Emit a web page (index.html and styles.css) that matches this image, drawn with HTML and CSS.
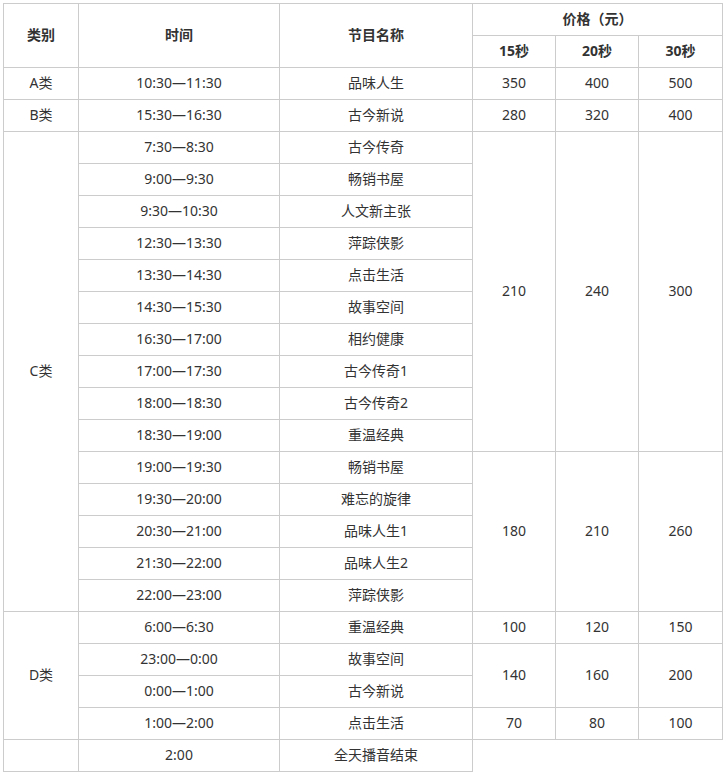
FILE: index.html
```html
<!DOCTYPE html>
<html lang="zh">
<head>
<meta charset="utf-8">
<link rel="stylesheet" href="styles.css">
</head>
<body>
<table class="schedule">
  <colgroup>
    <col class="c-type"><col class="c-time"><col class="c-name"><col class="c-price"><col class="c-price"><col class="c-price3">
  </colgroup>
  <tr class="head">
    <td rowspan="2">类别</td>
    <td rowspan="2">时间</td>
    <td rowspan="2">节目名称</td>
    <td colspan="3">价格（元）</td>
  </tr>
  <tr class="head">
    <td>15秒</td><td>20秒</td><td>30秒</td>
  </tr>
  <tr><td>A类</td><td>10:30—11:30</td><td>品味人生</td><td>350</td><td>400</td><td>500</td></tr>
  <tr><td>B类</td><td>15:30—16:30</td><td>古今新说</td><td>280</td><td>320</td><td>400</td></tr>
  <tr><td rowspan="15">C类</td><td>7:30—8:30</td><td>古今传奇</td><td rowspan="10">210</td><td rowspan="10">240</td><td rowspan="10">300</td></tr>
  <tr><td>9:00—9:30</td><td>畅销书屋</td></tr>
  <tr><td>9:30—10:30</td><td>人文新主张</td></tr>
  <tr><td>12:30—13:30</td><td>萍踪侠影</td></tr>
  <tr><td>13:30—14:30</td><td>点击生活</td></tr>
  <tr><td>14:30—15:30</td><td>故事空间</td></tr>
  <tr><td>16:30—17:00</td><td>相约健康</td></tr>
  <tr><td>17:00—17:30</td><td>古今传奇1</td></tr>
  <tr><td>18:00—18:30</td><td>古今传奇2</td></tr>
  <tr><td>18:30—19:00</td><td>重温经典</td></tr>
  <tr><td>19:00—19:30</td><td>畅销书屋</td><td rowspan="5">180</td><td rowspan="5">210</td><td rowspan="5">260</td></tr>
  <tr><td>19:30—20:00</td><td>难忘的旋律</td></tr>
  <tr><td>20:30—21:00</td><td>品味人生1</td></tr>
  <tr><td>21:30—22:00</td><td>品味人生2</td></tr>
  <tr><td>22:00—23:00</td><td>萍踪侠影</td></tr>
  <tr><td rowspan="4">D类</td><td>6:00—6:30</td><td>重温经典</td><td>100</td><td>120</td><td>150</td></tr>
  <tr><td>23:00—0:00</td><td>故事空间</td><td rowspan="2">140</td><td rowspan="2">160</td><td rowspan="2">200</td></tr>
  <tr><td>0:00—1:00</td><td>古今新说</td></tr>
  <tr><td>1:00—2:00</td><td>点击生活</td><td>70</td><td>80</td><td>100</td></tr>
  <tr><td></td><td>2:00</td><td>全天播音结束</td></tr>
</table>
</body>
</html>
```
FILE: styles.css
```css
html, body {
  margin: 0;
  padding: 0;
  background: #fff;
}
body {
  padding: 3px 0 0 3px;
  font-family: "Noto Sans", "Noto Sans CJK SC", sans-serif;
  font-size: 14px;
  color: #333;
}
.schedule {
  border-collapse: collapse;
  table-layout: fixed;
  width: 720px;
}
.c-type { width: 75px; }
.c-time { width: 201px; }
.c-name { width: 193px; }
.c-price { width: 83px; }
.c-price3 { width: 84px; }
.schedule td {
  border: 1px solid #ccc;
  height: 31px;
  padding: 0 0 1px;
  text-align: center;
  vertical-align: middle;
  line-height: 20px;
  box-sizing: border-box;
}
.schedule tr { height: 32px; }
.head td {
  font-weight: bold;
}
```
